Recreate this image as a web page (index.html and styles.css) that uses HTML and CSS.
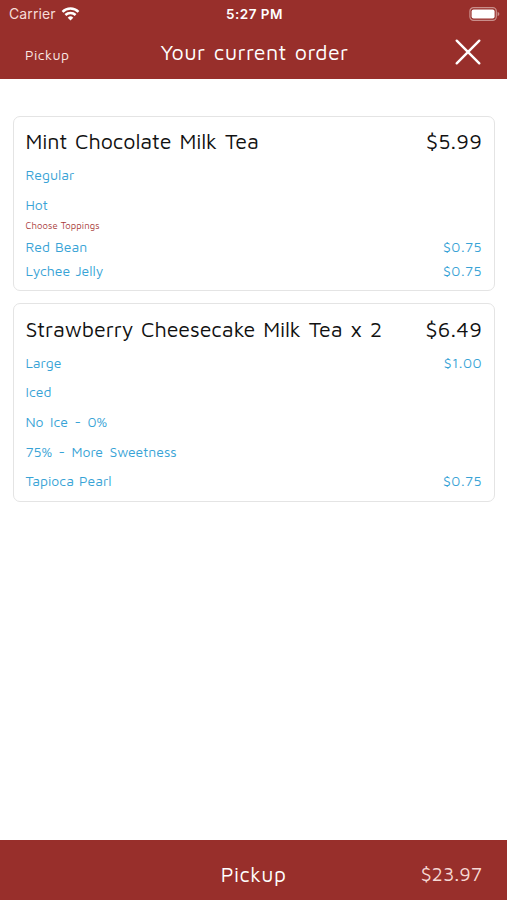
FILE: index.html
```
<!DOCTYPE html>
<html lang="en">
<head>
  <meta charset="UTF-8">
  <title>Your current order</title>
  <link rel="stylesheet" href="styles.css">
</head>
<body>
  <header>
    <div class="status-bar">
      <div class="carrier">
        <span>Carrier</span>
        <svg class="wifi" width="19" height="14" viewBox="0 0 18 14">
          <path d="M1 4.8 A11.5 11.5 0 0 1 17 4.8" />
          <path d="M3.9 8 A7.2 7.2 0 0 1 14.1 8" />
          <path class="dot" d="M9 13.5 L6.2 10.7 A4 4 0 0 1 11.8 10.7 Z" />
        </svg>
      </div>
      <span class="time">5:27 PM</span>
      <svg class="battery" width="31" height="14" viewBox="0 0 31 14">
        <rect class="shell" x="0.9" y="0.7" width="26.4" height="12.6" rx="3.6" />
        <rect class="charge" x="2.6" y="2.4" width="23" height="9.2" rx="2" />
        <path class="cap" d="M28.6 4.8 Q30.4 5.6 30.4 7 Q30.4 8.4 28.6 9.2 Z" />
      </svg>
    </div>
    <div class="title-bar">
      <span class="order-type">Pickup</span>
      <h1>Your current order</h1>
      <button class="close" aria-label="Close">
        <svg width="26" height="26" viewBox="0 0 26 26">
          <path d="M1.7 1.7 L24.3 24.3 M24.3 1.7 L1.7 24.3" />
        </svg>
      </button>
    </div>
  </header>
  <main>
    <section class="card">
      <div class="item"><h2>Mint Chocolate Milk Tea</h2><span class="total">$5.99</span></div>
      <div class="option"><span>Regular</span></div>
      <div class="option"><span>Hot</span></div>
      <h3>Choose Toppings</h3>
      <div class="option topping"><span>Red Bean</span><span class="price">$0.75</span></div>
      <div class="option topping"><span>Lychee Jelly</span><span class="price">$0.75</span></div>
    </section>
    <section class="card">
      <div class="item"><h2>Strawberry Cheesecake Milk Tea x 2</h2><span class="total">$6.49</span></div>
      <div class="option"><span>Large</span><span class="price">$1.00</span></div>
      <div class="option"><span>Iced</span></div>
      <div class="option level"><span>No Ice - 0%</span></div>
      <div class="option level"><span>75% - More Sweetness</span></div>
      <div class="option"><span>Tapioca Pearl</span><span class="price">$0.75</span></div>
    </section>
  </main>
  <footer>
    <span class="checkout">Pickup</span>
    <span class="amount">$23.97</span>
  </footer>
</body>
</html>
```
FILE: styles.css
```
* {
  box-sizing: border-box;
}
body {
  font-family: 'Maven Pro', 'Noto Sans', sans-serif;
  background: #fff;
  margin: 0;
  height: 900px;
  display: flex;
  flex-direction: column;
  color: #111;
}
h1, h2, h3 {
  margin: 0;
  font-weight: 400;
}
header {
  background: #982f2b;
  color: #fff;
  height: 79px;
}
.status-bar {
  font-family: Inter, sans-serif;
  display: grid;
  grid-template-columns: 1fr auto 1fr;
  align-items: center;
  height: 27px;
  padding: 0 7px 0 9px;
  font-size: 14px;
}
.carrier {
  display: flex;
  align-items: center;
  gap: 5px;
  color: #f6dcd8;
  letter-spacing: 0.1px;
}
.wifi {
  fill: none;
  stroke: #fff;
  stroke-width: 2.5;
}
.wifi .dot {
  fill: #fff;
  stroke: none;
}
.time {
  font-weight: 600;
  font-size: 13.5px;
  letter-spacing: 0.5px;
}
.battery {
  justify-self: end;
}
.battery .shell {
  fill: none;
  stroke: #c98f8b;
  stroke-width: 1.2;
}
.battery .charge {
  fill: #fff;
}
.battery .cap {
  fill: #c98f8b;
}
.title-bar {
  display: grid;
  grid-template-columns: 1fr auto 1fr;
  align-items: center;
  height: 50px;
  padding: 0 26px 0 25px;
}
.order-type {
  font-size: 14px;
  padding-top: 4px;
  letter-spacing: 0.4px;
  color: #fbe9e6;
}
h1 {
  font-size: 21.5px;
  letter-spacing: 0.4px;
  word-spacing: 1.5px;
  padding: 0 0 1px 3px;
}
.close {
  justify-self: end;
  display: flex;
  border: none;
  background: none;
  padding: 0;
  cursor: pointer;
}
.close svg {
  fill: none;
  stroke: #fff;
  stroke-width: 2.4;
  stroke-linecap: round;
}
main {
  flex: 1;
  padding: 37px 12px 0 13px;
}
.card {
  border: 1px solid #e4e4e4;
  border-radius: 7px;
  padding: 7px 12px 8px 11.5px;
  margin-bottom: 12px;
}
.card + .card {
  padding-bottom: 5px;
}
.item,
.option {
  display: flex;
  justify-content: space-between;
  align-items: center;
}
.item {
  height: 36px;
}
h2,
.total {
  font-size: 21.5px;
  line-height: 1;
}
h2 {
  letter-spacing: -0.1px;
  word-spacing: 1.8px;
}
.total {
  letter-spacing: 0.2px;
}
.option {
  height: 29.7px;
  font-size: 14px;
  word-spacing: 1px;
  color: #38a3d6;
}
.level {
  word-spacing: 2.4px;
}
h3 {
  height: 15px;
  font-size: 9.5px;
  line-height: 14px;
  letter-spacing: 0.1px;
  color: #a83a38;
}
.topping {
  height: 24px;
}
.price {
  letter-spacing: 0.5px;
}
footer {
  background: #982f2b;
  color: #fff;
  height: 60px;
  padding: 7px 25px 0;
  display: grid;
  grid-template-columns: 1fr auto 1fr;
  align-items: center;
}
.checkout {
  grid-column: 2;
  font-size: 21px;
  font-weight: 450;
  letter-spacing: 0.4px;
}
.amount {
  justify-self: end;
  font-size: 19.5px;
  color: #f6d9d5;
}
```
